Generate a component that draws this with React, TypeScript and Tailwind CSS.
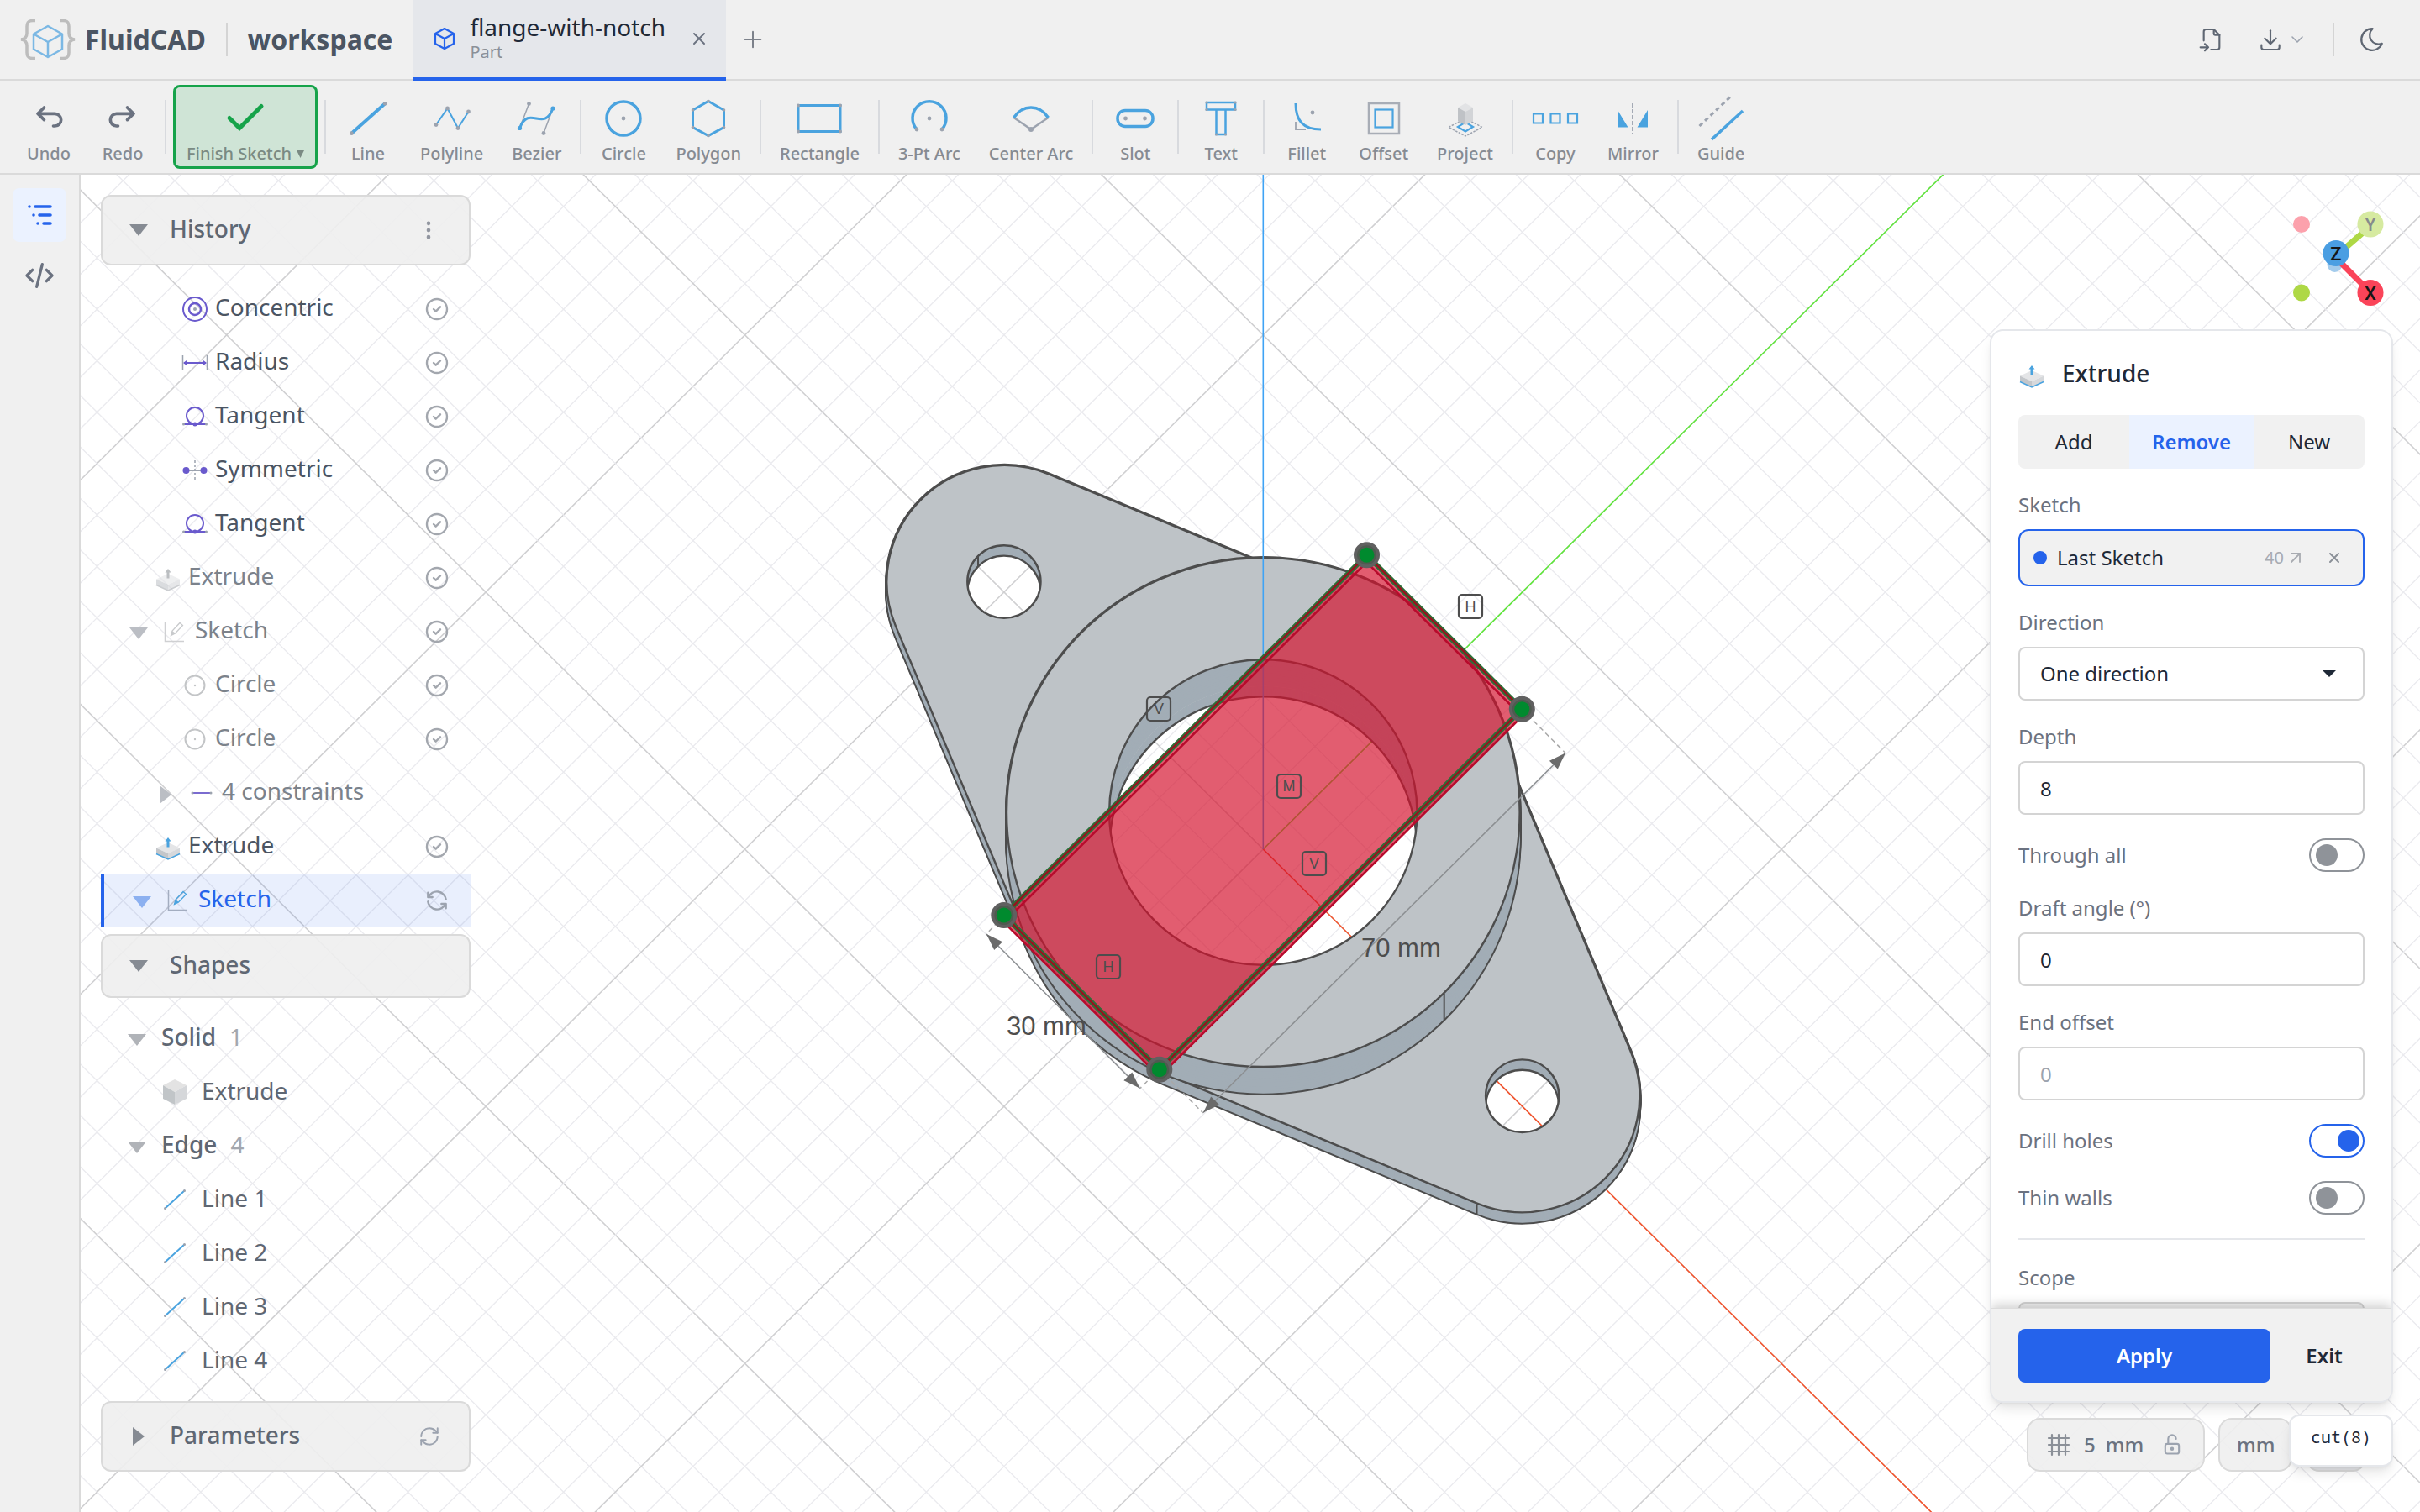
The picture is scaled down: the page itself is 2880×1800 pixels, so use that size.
import { useState, type ReactNode } from 'react';
import {
  TbArrowBackUp,
  TbArrowForwardUp,
  TbChevronDown,
  TbCircleCheck,
  TbCode,
  TbDotsVertical,
  TbDownload,
  TbFileImport,
  TbLockOpen,
  TbMoon,
  TbPlus,
  TbRefresh,
  TbX,
} from 'react-icons/tb';
import { ArrowUpRight, RefreshCw } from 'lucide-react';

const BLUE = '#4aa3df';
const GRAY = '#9ca3af';
const VIOLET = '#6a5acd';

//
// Icons
//

const Logo = () => (
  <svg className="h-12 w-[68px]" viewBox="0 0 68 48" fill="none">
    <g stroke="#bdbdbd" strokeWidth="3.5">
      <path d="M19 1.5h-3c-5 0-7 2-7 7v8c0 4-2 7-7 7.5c5 .5 7 3.5 7 7.5v8c0 5 2 7 7 7h3" />
      <path d="M49 1.5h3c5 0 7 2 7 7v8c0 4 2 7 7 7.5c-5 .5-7 3.5-7 7.5v8c0 5-2 7-7 7h-3" />
    </g>
    <path d="M34 8l17 9.5v18L34 45 17 35.5v-18zM17 17.5L34 27l17-9.5M34 27v18" stroke="#7bb8e4" strokeWidth="2.5" strokeLinejoin="round" />
  </svg>
);

const CubeOutline = () => (
  <svg className="h-7 w-7" viewBox="0 0 28 28" fill="none" stroke="#2563eb" strokeWidth="2.2" strokeLinejoin="round">
    <path d="M14 2l11 6v12l-11 6-11-6V8zM3 8l11 6 11-6M14 14v12" />
  </svg>
);

const TreeIcon = () => (
  <svg className="h-10 w-10" viewBox="0 0 40 40" stroke="currentColor" strokeWidth="3.6" strokeLinecap="round">
    <path d="M8 10h.01M15 10h18M13 20h.01M20 20h13M18 30h.01M25 30h8" />
  </svg>
);

const Caret = ({ open = true, className }: { open?: boolean; className?: string }) => (
  <svg className={className} width="22" height="22" viewBox="0 0 22 22" fill="currentColor">
    {open ? <path d="M0 4h22l-11 14z" /> : <path d="M4 0v22l14-11z" />}
  </svg>
);

const ExtrudeIcon = ({ muted = false }: { muted?: boolean }) => (
  <svg className="h-8 w-8" viewBox="0 0 32 32">
    <g opacity={muted ? 0.6 : 1}>
      <path d="M16 11l14 6.5-14 6.5-14-6.5z" fill="#e4e5e7" />
      <path d="M2 17.5l14 6.5v7L2 24.5z" fill="#c3c6ca" />
      <path d="M30 17.5l-14 6.5v7l14-6.5z" fill="#d6d8db" />
      <path d="M2 24.5l14 6.500 14-6.5" fill="none" stroke={muted ? '#a9adb2' : BLUE} strokeWidth="1.5" />
      <path d="M16 5l3.5 4.5h-2v7h-3v-7h-2z" fill={muted ? '#8f9499' : BLUE} />
    </g>
  </svg>
);

const SketchIcon = ({ muted = false }: { muted?: boolean }) => (
  <svg className="h-8 w-8" viewBox="0 0 32 32" fill="none">
    <path d="M4.5 4v23.5H27" stroke={muted ? '#cfd0d2' : '#a3adc0'} strokeWidth="1.5" />
    <path d="M11.5 20.5l1.5-5.500 9-9.500 3.500 3-9 9.500z" stroke={muted ? '#c8cacc' : BLUE} strokeWidth="1.3" />
    <path d="M11.5 20.5l1.5-5.5 4 3z" fill={muted ? '#c8cacc' : BLUE} />
  </svg>
);

const SolidIcon = () => (
  <svg className="h-8 w-8" viewBox="0 0 32 32">
    <path d="M16 1l14 7-14 8L2 8z" fill="#e3e3e3" />
    <path d="M2 8l14 8v15L2 24z" fill="#c1c5c8" />
    <path d="M30 8l-14 8v15l14-7z" fill="#d5d7da" />
  </svg>
);

const EdgeIcon = () => (
  <svg className="h-8 w-8" viewBox="0 0 32 32">
    <path d="M4.5 26.5l23-21" stroke={BLUE} strokeWidth="2" />
    <circle cx="4.5" cy="26.5" r="1.5" fill={GRAY} />
    <circle cx="27.5" cy="5.5" r="1.5" fill={GRAY} />
  </svg>
);

const ConcentricIcon = () => (
  <svg className="h-8 w-8" viewBox="0 0 32 32" fill="none" stroke={VIOLET}>
    <circle cx="16" cy="16" r="14" strokeWidth="2" />
    <circle cx="16" cy="16" r="7" strokeWidth="2.5" />
    <circle cx="16" cy="16" r="2" fill={GRAY} stroke="none" />
  </svg>
);

const RadiusIcon = () => (
  <svg className="h-8 w-8" viewBox="0 0 32 32">
    <path d="M1.5 7v18M30.5 7v18" stroke={GRAY} strokeWidth="1.5" />
    <path d="M3 16h26" stroke={VIOLET} strokeWidth="2" />
    <path d="M2 16l4-3v6zM30 16l-4-3v6z" fill={VIOLET} />
  </svg>
);

const TangentIcon = () => (
  <svg className="h-8 w-8" viewBox="0 0 32 32">
    <circle cx="16" cy="15" r="10" fill="none" stroke={VIOLET} strokeWidth="2" />
    <path d="M2 25h28" stroke={VIOLET} strokeWidth="2" />
    <circle cx="16" cy="25" r="2.5" fill={VIOLET} />
    <circle cx="2.5" cy="25" r="1.5" fill={GRAY} />
    <circle cx="29.5" cy="25" r="1.5" fill={GRAY} />
  </svg>
);

const SymmetricIcon = () => (
  <svg className="h-8 w-8" viewBox="0 0 32 32">
    <path d="M6 16h20" stroke={GRAY} strokeWidth="2" />
    <path d="M16 4v24" stroke={GRAY} strokeWidth="1.5" strokeDasharray="3 2" />
    <circle cx="5.5" cy="16" r="4" fill={VIOLET} />
    <circle cx="26.5" cy="16" r="4" fill={VIOLET} />
  </svg>
);

const CircleIcon = () => (
  <svg className="h-8 w-8" viewBox="0 0 32 32">
    <circle cx="16" cy="16" r="11.5" fill="none" stroke="#c3c5c7" strokeWidth="2" />
    <circle cx="16" cy="16" r="1.2" fill="#c3c5c7" />
  </svg>
);

const ConstraintIcon = () => (
  <svg className="h-8 w-8" viewBox="0 0 32 32">
    <path d="M5 16h22" stroke="#7a6bd0" strokeWidth="2" />
    <circle cx="5" cy="16" r="1.5" fill={GRAY} />
    <circle cx="27" cy="16" r="1.5" fill={GRAY} />
  </svg>
);

const GridIcon = () => (
  <svg className="h-7 w-7" viewBox="0 0 28 28" stroke="#8b9098" strokeWidth="2.2" strokeLinecap="round">
    <path d="M6 2v24M14 2v24M22 2v24M2 6h24M2 14h24M2 22h24" />
  </svg>
);

const Dots = ({ at, r = 2.4 }: { at: number[][]; r?: number }) => (
  <g fill={GRAY} stroke="none">
    {at.map(([x, y], i) => (
      <circle key={i} cx={x} cy={y} r={r} />
    ))}
  </g>
);

const toolIcons: Record<string, ReactNode> = {
  Line: (
    <>
      <path d="M4.4 41.7L44.2 6.3" strokeWidth="4" />
      <Dots at={[[4.4, 41.7], [44.2, 6.3]]} />
    </>
  ),
  Polyline: (
    <>
      <path d="M5 31.5L18.5 12 31 35.5 43.5 16" strokeWidth="2" />
      <Dots at={[[5, 31.5], [18.5, 12], [31, 35.5], [43.5, 16]]} />
    </>
  ),
  Bezier: (
    <>
      <path d="M3.5 35.5L14.5 6.5M43 12L32 41.5" stroke={GRAY} strokeWidth="1.5" />
      <path d="M3.5 35.5C14.5 6.5 32 41.5 43 12" strokeWidth="3" />
      <Dots at={[[14.5, 6.5], [32, 41.5]]} />
      <circle cx="3.5" cy="35.5" r="2.6" fill={BLUE} stroke="none" />
      <circle cx="43" cy="12" r="2.6" fill={BLUE} stroke="none" />
    </>
  ),
  Circle: (
    <>
      <circle cx="24" cy="24" r="20" strokeWidth="3.5" />
      <Dots at={[[24, 24]]} />
    </>
  ),
  Polygon: (
    <>
      <path d="M24 3.5L42.5 14v20.500L24 44.5 5.5 34.500V14z" strokeWidth="3" />
      <Dots at={[[24, 3.5], [42.5, 14], [42.5, 34.5], [24, 44.5], [5.5, 34.5], [5.5, 14]]} r={1.8} />
    </>
  ),
  Rectangle: (
    <>
      <path d="M-1 8.5h50v31H-1z" strokeWidth="3" />
      <Dots at={[[-1, 8.5], [49, 8.5], [-1, 39.5], [49, 39.5]]} r={2} />
    </>
  ),
  '3-Pt Arc': (
    <>
      <path d="M9 37A20 20 0 1 1 39 37" strokeWidth="3.5" />
      <Dots at={[[24, 24], [9, 37], [39, 37]]} />
    </>
  ),
  'Center Arc': (
    <>
      <path d="M3.5 23L24 37 44.5 23" stroke={GRAY} strokeWidth="2.4" />
      <path d="M3.5 23C14 7 34 7 44.5 23" strokeWidth="3.5" />
      <Dots at={[[24, 37]]} r={3} />
    </>
  ),
  Slot: (
    <>
      <rect x="3" y="14.5" width="42" height="19" rx="9" strokeWidth="3.5" />
      <Dots at={[[12.5, 24], [35.5, 24]]} />
    </>
  ),
  Text: (
    <>
      <path d="M7 5h34v8.500H7zM18.5 13.5h11v29.5h-11z" strokeWidth="2.5" />
      <Dots at={[[7, 5], [41, 5], [7, 13.5], [41, 13.5], [18.5, 43], [29.5, 43]]} r={1.6} />
    </>
  ),
  Fillet: (
    <>
      <path d="M11 28v9h12" stroke={GRAY} strokeWidth="1.8" />
      <path d="M11 6c0 20 8 31 30 31" strokeWidth="3" />
      <Dots at={[[31, 17]]} />
    </>
  ),
  Offset: (
    <>
      <rect x="6" y="6" width="36" height="36" stroke="#a8adb6" strokeWidth="2.5" />
      <rect x="13.5" y="13.5" width="21" height="21" strokeWidth="2.2" />
    </>
  ),
  Project: (
    <>
      <path d="M24 24l20 10.5L24 45 4 34.5z" stroke={GRAY} strokeWidth="1.5" strokeDasharray="2.5 1.5" />
      <path d="M24 28.5l9 5.5-9 5.5-9-5.5z" strokeWidth="2.2" />
      <path d="M24 6l9 5-9 5-9-5z" fill="#e2e3e5" stroke="none" />
      <path d="M15 11l9 5v16l-9-5z" fill="#bfc2c6" stroke="none" />
      <path d="M33 11l-9 5v16l9-5z" fill="#d2d4d7" stroke="none" />
    </>
  ),
  Copy: <path d="M-2 18.5h11v11H-2zM18.5 18.5h11v11h-11zM39 18.5h11v11H39z" strokeWidth="2.2" />,
  Mirror: (
    <>
      <path d="M24 6v36" stroke={GRAY} strokeWidth="1.8" strokeDasharray="5 2" />
      <path d="M6 14v20.5h12.500zM42 14v20.500H29.5z" fill={BLUE} stroke="none" />
    </>
  ),
  Guide: (
    <>
      <path d="M-1.5 33L35.5-2" stroke={GRAY} strokeWidth="3" strokeDasharray="5 4" />
      <path d="M13 49l37-34" strokeWidth="3.5" />
    </>
  ),
};

//
// Header
//

const Header = () => (
  <header className="flex h-24 shrink-0 items-stretch justify-between border-b-2 border-[#dadada] bg-[#f0f0f0]">
    <div className="flex items-stretch">
      <div className="flex items-center pl-[23px] text-[32px] text-[#4b5563]">
        <Logo />
        <span className="ml-2.5 font-bold">FluidCAD</span>
        <span className="mx-6 h-10 w-0.5 bg-[#d4d4d4]" />
        <span className="font-bold">workspace</span>
      </div>
      <div className="-mb-0.5 ml-6 flex items-center border-b-4 border-[#2563eb] bg-[#e5e7eb] pr-5 pl-6">
        <CubeOutline />
        <div className="mr-7 ml-4 flex flex-col">
          <span className="text-[28px] leading-8 text-[#1f2937]">flange-with-notch</span>
          <span className="text-xl leading-7 text-[#8b9098]">Part</span>
        </div>
        <button aria-label="Close tab" className="text-[#6b7280]">
          <TbX size={24} strokeWidth={2} />
        </button>
      </div>
      <button aria-label="New tab" className="ml-4 text-[#7c818a]">
        <TbPlus size={32} strokeWidth={1.5} />
      </button>
    </div>
    <div className="flex items-center pr-10 text-[#5f6773]">
      <button aria-label="Import file">
        <TbFileImport size={32} strokeWidth={1.6} />
      </button>
      <button aria-label="Export" className="ml-[38px] flex items-center">
        <TbDownload size={32} strokeWidth={1.6} />
        <TbChevronDown size={24} strokeWidth={1.6} className="ml-1 text-[#9ca3af]" />
      </button>
      <span className="mr-7 ml-[30px] h-10 w-0.5 bg-[#d4d4d4]" />
      <button aria-label="Dark mode">
        <TbMoon size={34} strokeWidth={1.6} />
      </button>
    </div>
  </header>
);

//
// Toolbar
//

const ToolSeparator = () => <span className="mx-1 h-16 w-0.5 shrink-0 bg-[#d8dade]" />;

const ToolButton = ({ label, children }: { label: string; children: ReactNode }) => (
  <button className="flex h-[100px] min-w-22 flex-col items-center justify-end gap-1 rounded-lg px-4 pb-1 text-xl leading-7 font-medium text-[#868b93]">
    {children}
    <span>{label}</span>
  </button>
);

const toolGroups = [
  ['Line', 'Polyline', 'Bezier'],
  ['Circle', 'Polygon'],
  ['Rectangle'],
  ['3-Pt Arc', 'Center Arc'],
  ['Slot'],
  ['Text'],
  ['Fillet', 'Offset', 'Project'],
  ['Copy', 'Mirror'],
  ['Guide'],
];

const Toolbar = () => (
  <div className="flex h-28 shrink-0 items-center gap-0.5 border-b-2 border-[#dadada] bg-[#f0f0f0] pl-3.5">
    <div className="flex">
      <ToolButton label="Undo">
        <TbArrowBackUp size={44} className="mb-1 text-[#6b7280]" />
      </ToolButton>
      <ToolButton label="Redo">
        <TbArrowForwardUp size={44} className="mb-1 text-[#6b7280]" />
      </ToolButton>
    </div>
    <ToolSeparator />
    <button className="mx-0.5 flex h-[100px] w-[172px] flex-col items-center justify-end gap-1 rounded-lg border-3 border-[#16a34a] bg-[#cfe4d6] pb-px text-xl leading-7 font-medium text-[#7a8a83]">
      <svg className="h-12 w-12" viewBox="0 0 48 48" fill="none">
        <path d="M5 23.5L17 35.5 43 9.5" stroke="#16a34a" strokeWidth="5" strokeLinecap="round" />
      </svg>
      <span className="flex items-center gap-1.5">
        Finish Sketch
        <svg width="9" height="9" viewBox="0 0 9 9" fill="currentColor">
          <path d="M0 0h9L4.5 9z" />
        </svg>
      </span>
    </button>
    {toolGroups.map((group) => (
      <div key={group[0]} className="flex items-center gap-0.5">
        <ToolSeparator />
        {group.map((name) => (
          <ToolButton key={name} label={name}>
            <svg className="h-12 w-12 overflow-visible" viewBox="0 0 48 48" fill="none" stroke={BLUE}>
              {toolIcons[name]}
            </svg>
          </ToolButton>
        ))}
      </div>
    ))}
  </div>
);

//
// Left side
//

const Rail = () => (
  <nav className="flex w-24 shrink-0 flex-col items-center gap-2 border-r-2 border-[#dadada] bg-[#f0f0f0] pt-4">
    <button aria-label="Model tree" className="flex h-16 w-16 items-center justify-center rounded-lg bg-[#ebf2ff] text-[#2563eb]">
      <TreeIcon />
    </button>
    <button aria-label="Code" className="flex h-16 w-16 items-center justify-center text-[#6b7280]">
      <TbCode size={40} />
    </button>
  </nav>
);

const SectionHeader = ({ title, open = true, tall = false, children }: { title: string; open?: boolean; tall?: boolean; children?: ReactNode }) => (
  <div className={`flex shrink-0 items-center rounded-xl border-2 border-[#dadada] bg-[#eeeeee]/90 pr-[34px] pl-8 text-[28px] font-medium text-[#5f6773] ${tall ? 'h-[84px]' : 'h-[76px]'}`}>
    <Caret open={open} className="text-[#868b93]" />
    <span className="ml-[26px] flex-1 pb-1">{title}</span>
    {children}
  </div>
);

interface HistoryItem {
  label: string;
  icon: ReactNode;
  indent: string;
  muted?: boolean;
  caret?: 'open' | 'closed';
  selected?: boolean;
  noStatus?: boolean;
}

const historyItems: HistoryItem[] = [
  { label: 'Concentric', icon: <ConcentricIcon />, indent: 'pl-24' },
  { label: 'Radius', icon: <RadiusIcon />, indent: 'pl-24' },
  { label: 'Tangent', icon: <TangentIcon />, indent: 'pl-24' },
  { label: 'Symmetric', icon: <SymmetricIcon />, indent: 'pl-24' },
  { label: 'Tangent', icon: <TangentIcon />, indent: 'pl-24' },
  { label: 'Extrude', icon: <ExtrudeIcon muted />, indent: 'pl-16', muted: true },
  { label: 'Sketch', icon: <SketchIcon muted />, indent: 'pl-8', muted: true, caret: 'open' },
  { label: 'Circle', icon: <CircleIcon />, indent: 'pl-24', muted: true },
  { label: 'Circle', icon: <CircleIcon />, indent: 'pl-24', muted: true },
  { label: '4 constraints', icon: <ConstraintIcon />, indent: 'pl-16', muted: true, caret: 'closed', noStatus: true },
  { label: 'Extrude', icon: <ExtrudeIcon />, indent: 'pl-16' },
  { label: 'Sketch', icon: <SketchIcon />, indent: 'pl-8', caret: 'open', selected: true },
];

const HistoryRow = ({ item }: { item: HistoryItem }) => {
  const tone = item.selected
    ? 'border-l-4 border-[#2563eb] bg-[#2563eb]/10 text-[#2563eb]'
    : item.muted
      ? 'text-[#7b828b]'
      : 'text-[#4b5563]';
  return (
    <li className={`flex h-16 items-center pr-6 text-[28px] ${item.indent} ${tone}`}>
      {item.caret && (
        <Caret open={item.caret === 'open'} className={`mt-1 mr-4 ml-0.5 ${item.selected ? 'text-[#8cb0f0]' : 'text-[#bbbec4]'}`} />
      )}
      {item.icon}
      <span className="ml-2 flex-1 pb-1.5">{item.label}</span>
      {item.selected ? (
        <TbRefresh size={32} strokeWidth={1.8} className="text-[#9ca3af]" />
      ) : (
        !item.noStatus && <TbCircleCheck size={32} strokeWidth={1.8} className="text-[#a3a7ae]" />
      )}
    </li>
  );
};

const ShapeGroup = ({ title, icon, items }: { title: string; icon: ReactNode; items: string[] }) => (
  <div>
    <div className="flex h-16 items-center pl-8 text-[28px] font-medium text-[#5f6773]">
      <Caret className="mt-1 text-[#b0b3b8]" />
      <span className="ml-4.5 pb-1">{title}</span>
      <span className="ml-4 pb-1 font-normal text-[#a3a7ae]">{items.length}</span>
    </div>
    <ul>
      {items.map((name) => (
        <li key={name} className="flex h-16 items-center pl-[72px] text-[28px] text-[#5f6773]">
          {icon}
          <span className="ml-4 pb-1">{name}</span>
        </li>
      ))}
    </ul>
  </div>
);

const ModelTree = () => (
  <aside className="flex w-[440px] flex-col">
    <SectionHeader title="History" tall>
      <TbDotsVertical size={28} className="text-[#9296a0]" />
    </SectionHeader>
    <ul className="pt-5 pb-2">
      {historyItems.map((item, i) => (
        <HistoryRow key={i} item={item} />
      ))}
    </ul>
    <SectionHeader title="Shapes" />
    <div className="flex-1 pt-4">
      <ShapeGroup title="Solid" icon={<SolidIcon />} items={['Extrude']} />
      <ShapeGroup title="Edge" icon={<EdgeIcon />} items={['Line 1', 'Line 2', 'Line 3', 'Line 4']} />
    </div>
    <SectionHeader title="Parameters" open={false} tall>
      <RefreshCw size={26} strokeWidth={1.8} className="text-[#9ca3af]" />
    </SectionHeader>
  </aside>
);

//
// Viewport drawing. World units are mm, one mm is 8.723px on screen,
// and the camera tilt squeezes the vertical direction a little.
//

const CX = 1503.3;
const BASE = 1011; // z = 0
const PLATE = 998.6; // top of the plate
const TOP = 967; // top of the boss
const SX = 8.723;
const SY = 8.658;
const EDGE = '#4d4d4d';

const hull =
  'M13.3-32.375L56.08-14.8A16 16 0 0 1 56.08 14.8L13.3 32.375A35 35 0 0 1-13.3 32.375L-56.08 14.8A16 16 0 0 1-56.08-14.8L-13.3-32.375A35 35 0 0 1 13.3-32.375Z';
const ring = (x: number, r: number) => `M${x - r} 0a${r} ${r} 0 1 0 ${2 * r} 0a${r} ${r} 0 1 0 ${-2 * r} 0Z`;
const plateFace = hull + ring(-50, 5) + ring(50, 5) + ring(0, 21);
const bossFace = ring(0, 35) + ring(0, 21);

const at = (y: number) => `translate(${CX} ${y}) scale(${SX} ${SY}) rotate(45)`;
const levels = (from: number, to: number) => Array.from({ length: 13 }, (_, i) => from + ((to - from) * i) / 12);

const Prism = ({ outline, face, from, to }: { outline: string; face: string; from: number; to: number }) => (
  <>
    {levels(from, to).map((y) => (
      <path key={y} d={outline} transform={at(y)} fill="none" stroke={EDGE} strokeWidth="4" vectorEffect="non-scaling-stroke" />
    ))}
    {levels(from, to).map((y) => (
      <path key={y} d={face} transform={at(y)} fill="#a2adb6" fillRule="evenodd" />
    ))}
    <path d={face} transform={at(to)} fill="#bec3c7" fillRule="evenodd" />
    <path d={outline} transform={at(to)} fill="none" stroke={EDGE} strokeWidth="2.4" vectorEffect="non-scaling-stroke" />
  </>
);

const Hole = ({ id, cx, top, bottom, r }: { id: string; cx: number; top: number; bottom: number; r: number }) => (
  <g fill="none" stroke={EDGE} strokeWidth="2.4">
    <clipPath id={id}>
      <ellipse cx={cx} cy={top} rx={r * SX} ry={r * SY} />
    </clipPath>
    <ellipse cx={cx} cy={bottom} rx={r * SX} ry={r * SY} clipPath={`url(#${id})`} />
    <ellipse cx={cx} cy={top} rx={r * SX} ry={r * SY} />
  </g>
);

const GRID_X = 61.68;
const GRID_Y = 61.22;

const Grid = () => (
  <g>
    {Array.from({ length: 97 }, (_, i) => i - 48).map((k) => {
      const x = CX + k * GRID_X;
      const major = k % 10 === 0;
      const n = 30;
      return (
        <path
          key={k}
          d={`M${x - n * GRID_X} ${BASE - n * GRID_Y}L${x + n * GRID_X} ${BASE + n * GRID_Y}M${x - n * GRID_X} ${BASE + n * GRID_Y}L${x + n * GRID_X} ${BASE - n * GRID_Y}`}
          stroke={major ? '#d0d0d2' : '#ebebef'}
          strokeWidth={major ? 1.6 : 1.4}
        />
      );
    })}
  </g>
);

const corners = [
  [1626.5, 660.8],
  [1811.3, 844.2],
  [1379.8, 1273.2],
  [1194.8, 1089.6],
];
const poly = (dy: number) => corners.map(([x, y]) => `${x},${y + dy}`).join(' ');

const marks = [
  { letter: 'H', x: 1750, y: 722 },
  { letter: 'V', x: 1379, y: 844 },
  { letter: 'M', x: 1534, y: 936 },
  { letter: 'V', x: 1564, y: 1028 },
  { letter: 'H', x: 1319, y: 1151 },
];

const Arrow = ({ x, y, angle }: { x: number; y: number; angle: number }) => (
  <path d="M0 0l-20-7v14z" transform={`translate(${x} ${y}) rotate(${angle})`} fill="#6b6b6b" />
);

const Viewport = () => (
  <svg className="absolute inset-0 h-full w-full" viewBox="96 208 2784 1592" preserveAspectRatio="xMidYMid slice">
    <Grid />
    <path d={`M${CX} ${BASE}L${CX + 900} ${BASE - 893.3}`} stroke="#5fe83a" strokeWidth="1.5" />
    <path d={`M${CX} ${BASE}L${CX + 900} ${BASE + 893.3}`} stroke="#f5522a" strokeWidth="1.5" />

    <Prism outline={hull} face={plateFace} from={BASE} to={PLATE} />
    <Hole id="hole-left" cx={CX - 308.4} top={PLATE - 306.1} bottom={BASE - 306.1} r={5} />
    <Hole id="hole-right" cx={CX + 308.4} top={PLATE + 306.1} bottom={BASE + 306.1} r={5} />
    <Prism outline={ring(0, 35)} face={bossFace} from={PLATE} to={TOP} />
    <Hole id="bore" cx={CX} top={TOP} bottom={BASE} r={21} />
    <path d="M1718.7 1183v31M1757.5 1433.5v12M1164 662v12" stroke={EDGE} strokeWidth="2" />
    <path d={`M${CX} 208V${BASE}`} stroke="#3fa3f5" strokeWidth="1.6" />

    {/* cut preview */}
    <polygon points="1626.5,660.8 1811.3,844.2 1811.3,852.7 1379.8,1281.7 1194.8,1098.1 1194.8,1089.6" fill="#d4102c" fillOpacity="0.68" />
    <polygon points={poly(8.5)} fill="none" stroke="#b80a2c" strokeWidth="2.6" />
    <polygon points={poly(0)} fill="none" stroke="#2b7038" strokeWidth="6" />
    <polygon points={poly(0)} fill="none" stroke="#96141f" strokeWidth="2.4" />

    {/* dimensions */}
    <g stroke="#8c8f92" strokeWidth="1.5">
      <path d="M1174 1112L1356.5 1295.5M1863 896.5L1432 1324.5" />
      <path d="M1194.8 1090l-21 22M1379.8 1273l-23.5 23M1811 844l52 52.5M1379.8 1273l52 52" strokeDasharray="6 4" stroke="#a8a8a8" />
    </g>
    <Arrow x={1174} y={1112} angle={-135} />
    <Arrow x={1356.5} y={1295.5} angle={45} />
    <Arrow x={1863} y={896.5} angle={-45} />
    <Arrow x={1432} y={1324.5} angle={135} />

    {corners.map(([x, y]) => (
      <g key={x}>
        <circle cx={x} cy={y} r="15.5" fill="#606060" />
        <circle cx={x} cy={y} r="11.5" fill="#4f5a50" />
        <circle cx={x} cy={y} r="9" fill="#008a2e" />
      </g>
    ))}

    <g fontFamily="'Liberation Sans', Arial, sans-serif" fill="#4d4d4d">
      {marks.map((m) => (
        <g key={`${m.x}`}>
          <rect x={m.x - 14} y={m.y - 14} width="28" height="28" rx="4" fill="none" stroke="#4d4d4d" strokeWidth="2.2" />
          <text x={m.x} y={m.y + 6} fontSize="18" textAnchor="middle">
            {m.letter}
          </text>
        </g>
      ))}
      <text x="1620" y="1139" fontSize="31">70 mm</text>
      <text x="1198" y="1232" fontSize="31">30 mm</text>
    </g>
  </svg>
);

const Gizmo = () => (
  <svg className="mr-2 h-[120px] w-[120px] shrink-0" viewBox="2720 248 120 120" fontFamily="Roboto, sans-serif" fontSize="22" fontWeight="500" textAnchor="middle">
    <circle cx="2778.5" cy="315" r="9" fill="#a3cbec" />
    <path d="M2782 303L2812 277" stroke="#aed845" strokeWidth="7" strokeLinecap="round" />
    <path d="M2776 303l45 45" stroke="#fa4459" strokeWidth="7" />
    <circle cx="2739" cy="267" r="10" fill="#fca1ac" />
    <circle cx="2739" cy="348.5" r="10" fill="#aed845" />
    <circle cx="2821" cy="267" r="15.5" fill="#d6eaa0" />
    <circle cx="2780" cy="301.5" r="15.5" fill="#4a9ee2" />
    <circle cx="2821" cy="348.5" r="15.5" fill="#fa4459" />
    <text x="2821" y="275" fill="#858b8c">Y</text>
    <text x="2780" y="310" fill="#161616">Z</text>
    <text x="2821" y="357" fill="#161616">X</text>
  </svg>
);

//
// Extrude panel
//

const inputClass = 'h-16 w-full rounded-lg border-2 border-[#d4d4d4] bg-white px-6 text-2xl text-[#1f2937] placeholder:text-[#9ca3af]';

const Field = ({ id, label, children }: { id: string; label: string; children: ReactNode }) => (
  <div className="flex flex-col gap-2.5">
    <label htmlFor={id} className="text-2xl leading-[38px] text-[#6b7280]">
      {label}
    </label>
    {children}
  </div>
);

const Toggle = ({ label, initial = false }: { label: string; initial?: boolean }) => {
  const [on, setOn] = useState(initial);
  return (
    <label className="flex h-11 items-center justify-between pt-1 text-2xl text-[#6b7280]">
      {label}
      <input
        type="checkbox"
        checked={on}
        onChange={() => setOn(!on)}
        className="h-10 w-[66px] appearance-none rounded-full border-2 border-[#8f9399] bg-white pt-[5px] pl-1.5 before:block before:h-[26px] before:w-[26px] before:rounded-full before:bg-[#8f9399] checked:border-[#2563eb] checked:pl-8 checked:before:bg-[#2563eb]"
      />
    </label>
  );
};

const modes = ['Add', 'Remove', 'New'];

const ExtrudePanel = () => {
  const [mode, setMode] = useState('Remove');
  return (
    <section className="flex min-h-0 w-[480px] flex-1 flex-col overflow-hidden rounded-2xl border-2 border-[#e5e7eb] bg-white shadow-lg">
      <div className="flex min-h-0 flex-1 flex-col gap-6 overflow-hidden px-8 pt-8">
        <h2 className="mb-1 flex h-10 shrink-0 items-center text-[28px] font-medium text-[#1f2937]">
          <ExtrudeIcon />
          <span className="ml-5 pb-1">Extrude</span>
        </h2>
        <div className="flex h-16 shrink-0 overflow-hidden rounded-lg bg-[#f1f1f1] text-2xl text-[#1f2937]">
          {modes.map((m) => (
            <button key={m} onClick={() => setMode(m)} className={`flex-1 px-[27px] ${m === mode ? 'bg-[#ebf2ff] font-semibold text-[#2563eb]' : ''}`}>
              {m}
            </button>
          ))}
        </div>
        <Field id="sketch" label="Sketch">
          <div className="flex h-[68px] items-center rounded-xl border-2 border-[#2563eb] bg-[#f1f1f1] pr-6 pl-4">
            <span className="h-4 w-4 rounded-full bg-[#2563eb]" />
            <button id="sketch" className="ml-3 flex-1 text-left text-2xl text-[#1f2937]">
              Last Sketch
            </button>
            <a href="#line-40" className="flex items-center gap-0.5 text-xl text-[#a8abb1]">
              40
              <ArrowUpRight size={24} strokeWidth={1.8} />
            </a>
            <button aria-label="Clear sketch" className="ml-6 text-[#8b9098]">
              <TbX size={20} strokeWidth={2.4} />
            </button>
          </div>
        </Field>
        <Field id="direction" label="Direction">
          <div className="relative">
            <select id="direction" className={`${inputClass} appearance-none`}>
              <option>One direction</option>
              <option>Two directions</option>
            </select>
            <svg className="pointer-events-none absolute top-7 right-[34px] h-2 w-4" viewBox="0 0 16 8" fill="#1f2937">
              <path d="M0 0h16L8 8z" />
            </svg>
          </div>
        </Field>
        <Field id="depth" label="Depth">
          <input id="depth" defaultValue="8" className={inputClass} />
        </Field>
        <Toggle label="Through all" />
        <Field id="draft" label="Draft angle (°)">
          <input id="draft" defaultValue="0" className={inputClass} />
        </Field>
        <Field id="offset" label="End offset">
          <input id="offset" placeholder="0" className={inputClass} />
        </Field>
        <Toggle label="Drill holes" initial />
        <Toggle label="Thin walls" />
        <hr className="mt-1 mb-0.5 border-t-2 border-[#e5e7eb]" />
        <Field id="scope" label="Scope">
          <input id="scope" className="h-16 w-full shrink-0 rounded-lg border-2 border-[#d4d4d4] bg-[#f1f1f1] px-6 text-2xl" />
        </Field>
      </div>
      <div className="relative flex items-center gap-4 border-t border-[#dcdcdc] bg-[#f1f1f1] px-8 pt-6 pb-[22px] text-2xl font-semibold shadow-[0_-4px_12px_rgba(0,0,0,0.18)]">
        <button className="h-16 flex-1 rounded-lg bg-[#2563eb] text-white">Apply</button>
        <button className="h-16 w-24 text-[#1f2937]">Exit</button>
      </div>
    </section>
  );
};

const StatusBar = () => (
  <div className="relative mr-8 flex h-16 shrink-0 gap-4 text-2xl font-medium text-[#6b7280]">
    <div className="flex w-[212px] items-center rounded-2xl border-2 border-[#dadada] bg-[#eeeeee]/90 pl-[22px]">
      <GridIcon />
      <span className="ml-4">5</span>
      <span className="ml-3">mm</span>
      <TbLockOpen size={28} strokeWidth={1.8} className="ml-5 text-[#9ca3af]" />
    </div>
    <div className="flex w-22 items-center rounded-2xl border-2 border-[#dadada] bg-[#eeeeee]/90 pl-5">mm</div>
    <div className="w-[72px] rounded-2xl border-2 border-[#dadada] bg-[#e4e5e8]" />
    <output className="absolute -top-1 -right-8 flex h-[62px] w-[124px] items-center justify-center rounded-xl border-2 border-[#e5e7eb] bg-white pb-2 font-['Noto_Sans_Mono','DejaVu_Sans_Mono',monospace] text-xl font-normal text-[#1f2937] shadow-lg">
      cut(8)
    </output>
  </div>
);

export default function App() {
  return (
    <div className="flex h-screen flex-col overflow-hidden bg-white font-['Noto_Sans',sans-serif]">
      <Header />
      <Toolbar />
      <div className="flex min-h-0 flex-1">
        <Rail />
        <main className="relative flex-1 overflow-hidden">
          <Viewport />
          <div className="relative flex h-full justify-between pr-8 pb-12 pl-6">
            <div className="flex pt-6">
              <ModelTree />
            </div>
            <div className="flex flex-col items-end pt-10">
              <Gizmo />
              <div className="mt-6 mb-[18px] flex min-h-0 flex-1">
                <ExtrudePanel />
              </div>
              <StatusBar />
            </div>
          </div>
        </main>
      </div>
    </div>
  );
}
